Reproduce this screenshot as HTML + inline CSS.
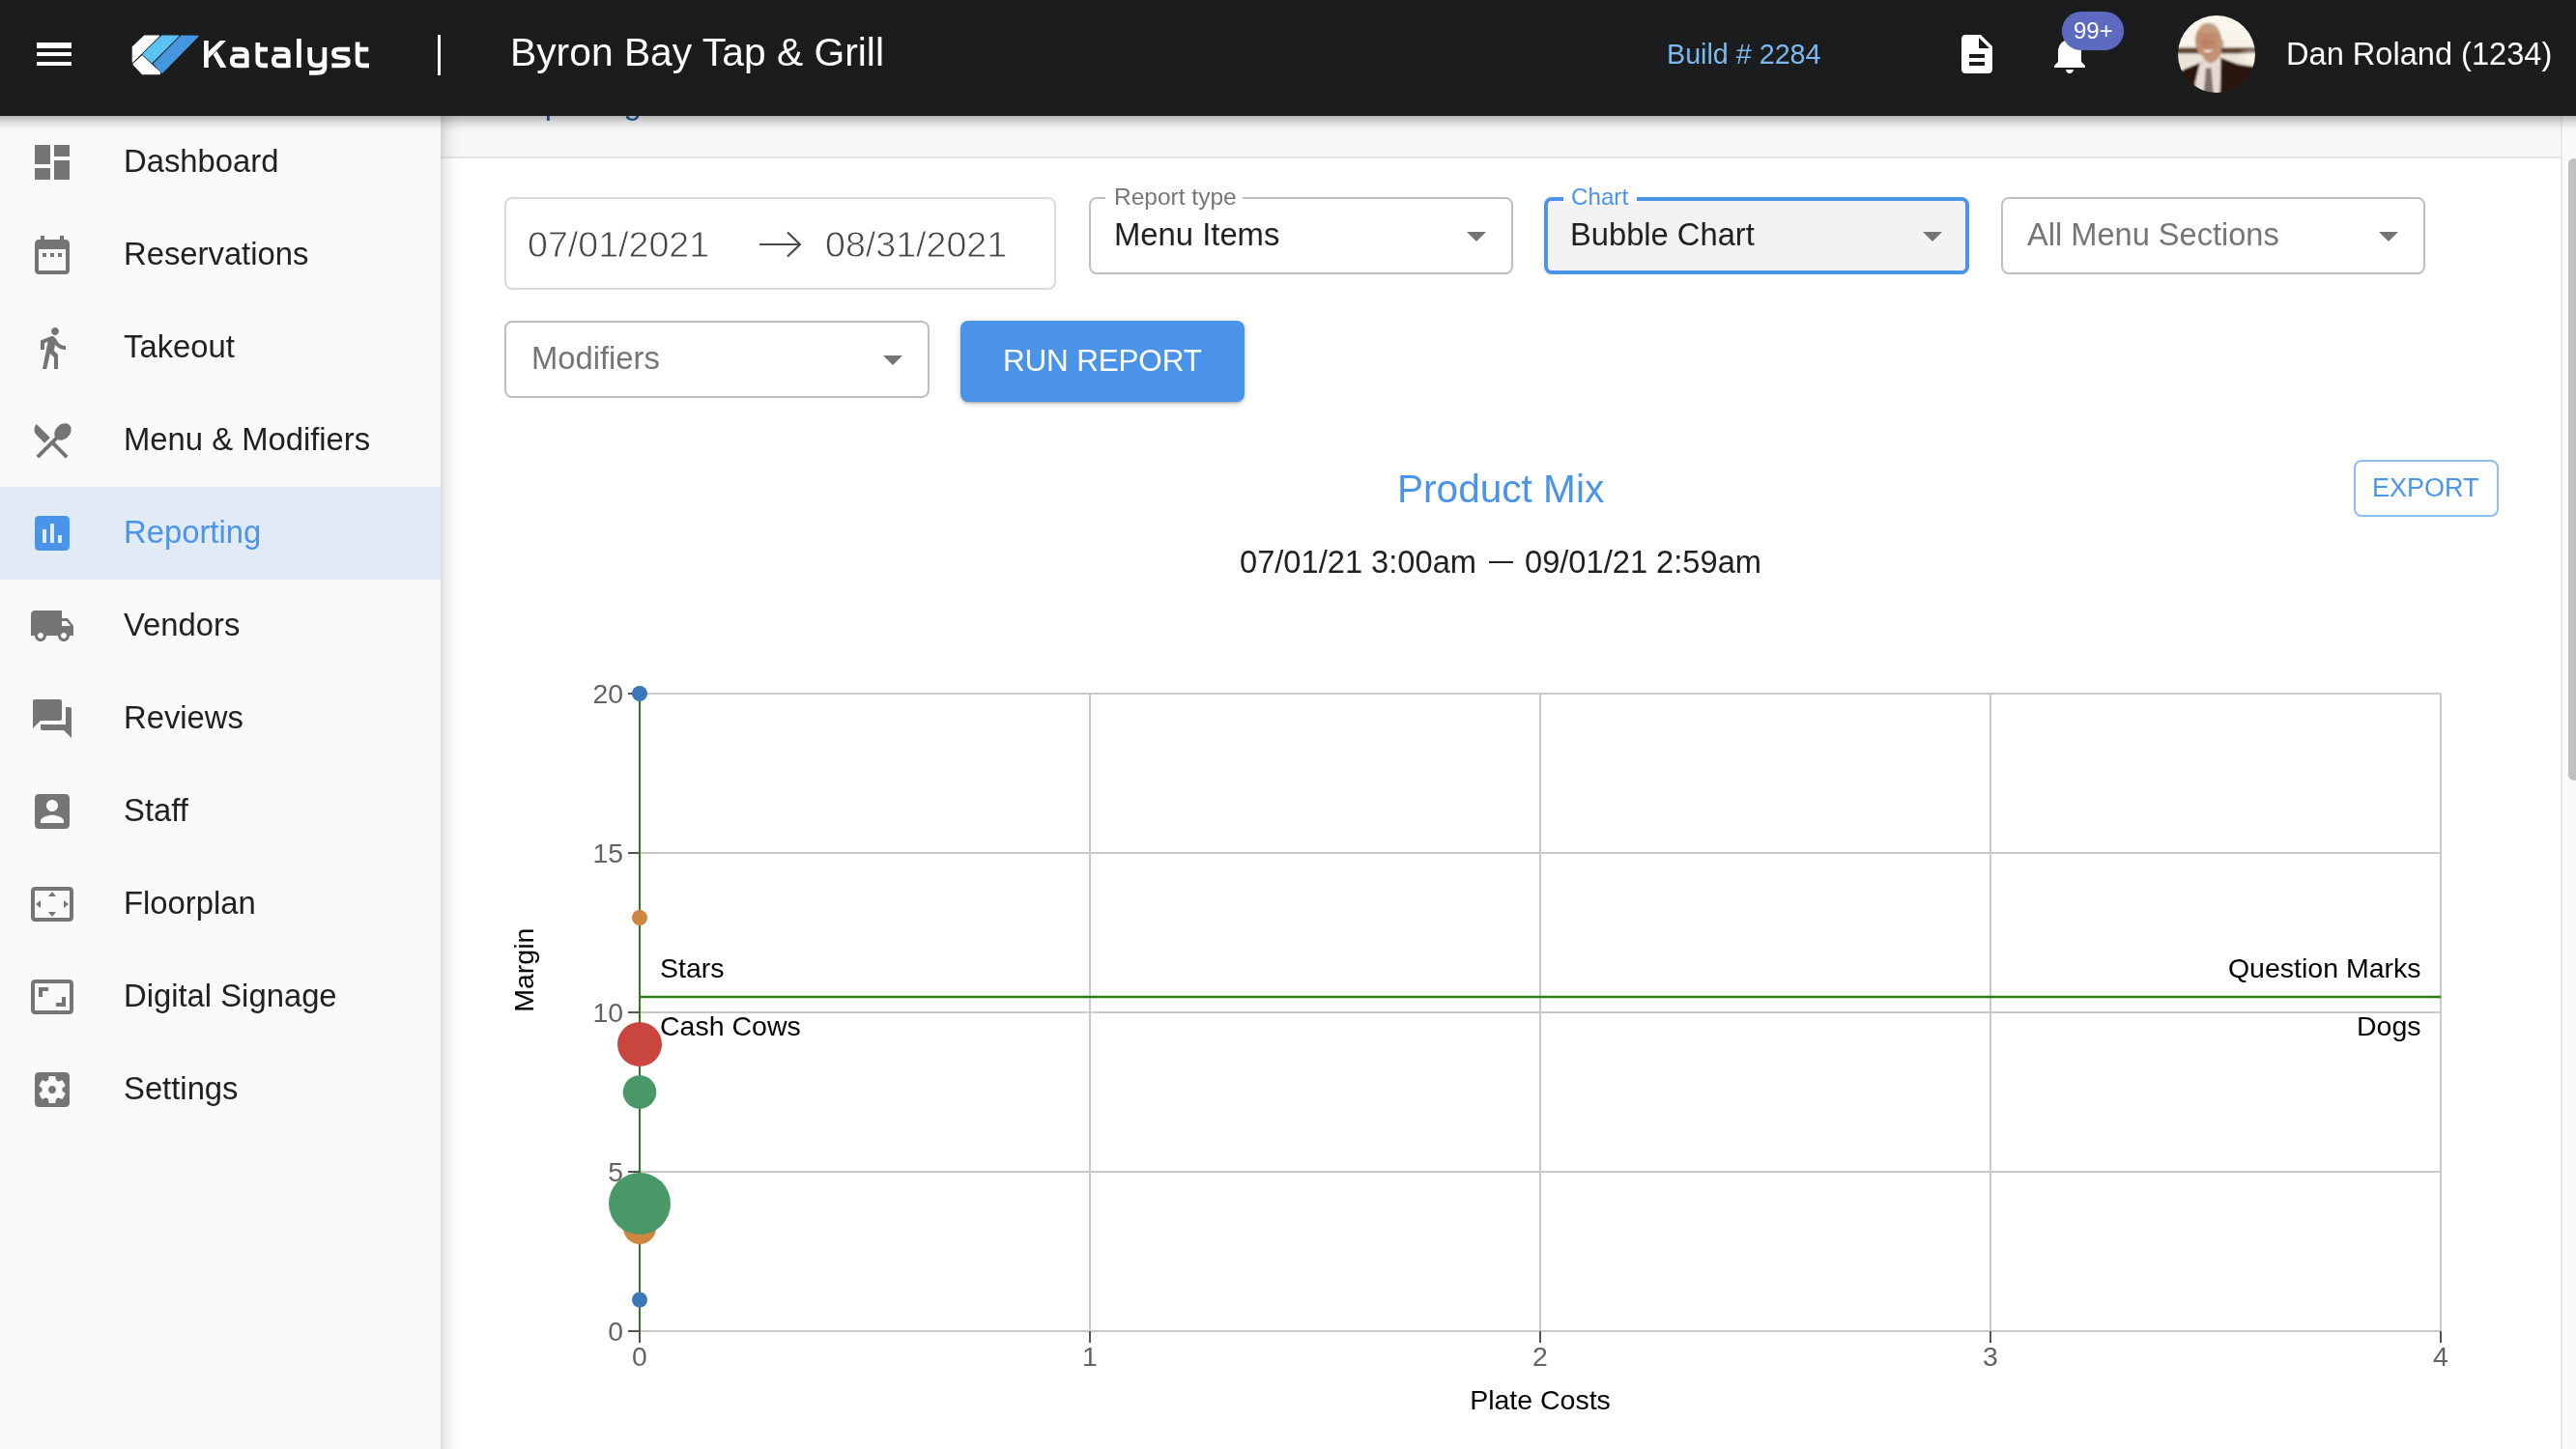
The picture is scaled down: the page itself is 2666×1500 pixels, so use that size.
<!DOCTYPE html>
<html><head><meta charset="utf-8">
<style>
*{box-sizing:border-box;margin:0;padding:0}
html,body{width:2666px;height:1500px;overflow:hidden;background:#fff;-webkit-font-smoothing:antialiased;font-family:"Liberation Sans",sans-serif}
.abs{position:absolute}
#hdr{position:absolute;left:0;top:0;width:2666px;height:120px;background:#1b1c1e;z-index:10}
#hshadow{position:absolute;left:-60px;top:0;width:2800px;height:120px;background:#1b1c1e;z-index:9;box-shadow:0 2px 14px rgba(0,0,0,.45)}
#main{position:absolute;left:0;top:0;width:2666px;height:1500px}
#side{position:absolute;left:0;top:120px;width:456px;height:1380px;background:#fafafa;z-index:5}
#sshadow{position:absolute;left:456px;top:120px;width:22px;height:1380px;z-index:5;background:linear-gradient(to right,rgba(0,0,0,.14) 0,rgba(0,0,0,.085) 4px,rgba(0,0,0,.05) 9px,rgba(0,0,0,.02) 14px,rgba(0,0,0,0) 21px)}
.item{position:absolute;left:0;width:456px;height:96px}
.item svg{position:absolute;left:30px;top:24px;width:48px;height:48px;fill:#757575}
.item span{position:absolute;left:128px;top:-1px;line-height:96px;font-size:32.8px;color:#212121}
.item.sel{background:#e0ebf6}
.item.sel svg{fill:#4a94e9}
.item.sel span{color:#4a94e9}
#crumb{position:absolute;left:456px;top:120px;width:2194px;height:44px;background:#f6f7f9;border-bottom:2px solid #e4e6e9}
#sb{position:absolute;left:2650px;top:120px;width:16px;height:1380px;background:#fafafa;border-left:2px solid #e8e8e8}
#thumb{position:absolute;left:2658px;top:164px;width:12px;height:644px;background:#c1c1c1;border-radius:8px}
.box{position:absolute;border-radius:8px;background:#fff}
.lbl{position:absolute;font-size:24.5px;line-height:24px;white-space:nowrap}
.gap{position:absolute;background:#fff}
.sel-arrow{position:absolute;width:0;height:0;border-left:10px solid transparent;border-right:10px solid transparent;border-top:10px solid #757575}
.txt{position:absolute;white-space:nowrap}
body>div,body>svg{will-change:transform}
</style></head><body>

<div id="hshadow"></div>
<div id="hdr">
  <svg class="abs" style="left:32px;top:32px" width="48" height="48" viewBox="0 0 24 24"><path fill="#fff" d="M3 18h18v-2H3v2zm0-5h18v-2H3v2zm0-6v2h18V6H3z"/></svg>
  
  <svg class="abs" style="left:0;top:0" width="400" height="100" viewBox="0 0 400 100">
    <g stroke-linejoin="round" stroke-width="1.2">
      <path d="M149.6 37 L164.6 37 L137.3 64 L137.3 48.6 Z" fill="#fff" stroke="#fff"/>
      <path d="M137.9 66.5 L147.1 58 L165.4 75 L165.4 76.6 L147.3 76.6 Z" fill="#fff" stroke="#fff"/>
      <path d="M148 56.2 L167.8 37 L184.8 37.2 L157.3 64.7 Z" fill="#5bc3f3" stroke="#5bc3f3"/>
      <path d="M159.2 66 L187.8 37 L205.2 37.3 L167.8 75.4 Z" fill="#4596de" stroke="#4596de"/>
    </g>
    <path fill="#fff" d="M227.8 42H234L215.6 60.8V53.6ZM220.6 56.6L224.3 52.8L234.4 70H228.2Z"/>
    <g fill="none" stroke="#fff" stroke-width="4.7">
      <path d="M213.4 42V70"/>
      <path d="M240.5 51.2H250Q255.3 51.2 255.3 56.5V70M255.3 58.2H245Q240.3 58.2 240.3 63Q240.3 67.8 245 67.8H255.3"/>
      <path d="M266.8 44V63Q266.8 67.8 272 67.8H277M264.4 51.2H277"/>
      <path d="M283.5 51.2H293Q298.3 51.2 298.3 56.5V70M298.3 58.2H288Q283.3 58.2 283.3 63Q283.3 67.8 288 67.8H298.3"/>
      <path d="M309.4 40V70"/>
      <path d="M320.7 49V61Q320.7 67.8 328 67.8Q335.9 67.8 335.9 61M335.9 49V70Q335.9 75.4 328 75.4H320"/>
      <path d="M362 51.2H350Q345.5 51.2 345.5 55Q345.5 58.8 350 59.2L356 59.8Q360.4 60.3 360.4 64Q360.4 67.8 356 67.8H343.3"/>
      <path d="M370.1 43.6V63Q370.1 67.8 375 67.8H382M367.7 51.2H381.3"/>
    </g>
  </svg>
  <svg class="abs" style="left:2022px;top:32px" width="48" height="48" viewBox="0 0 24 24"><path fill="#fff" d="M14 2H6c-1.1 0-1.99.9-1.99 2L4 20c0 1.1.89 2 1.99 2H18c1.1 0 2-.9 2-2V8l-6-6zm2 16H8v-2h8v2zm0-4H8v-2h8v2zm-3-5V3.5L18.5 9H13z"/></svg>
  <svg class="abs" style="left:2118px;top:32px" width="48" height="48" viewBox="0 0 24 24"><path fill="#fff" d="M12 22c1.1 0 2-.9 2-2h-4c0 1.1.89 2 2 2zm6-6v-5c0-3.07-1.64-5.64-4.5-6.32V4c0-.83-.67-1.5-1.5-1.5s-1.5.67-1.5 1.5v.68C7.63 5.36 6 7.92 6 11v5l-2 2v1h16v-1l-2-2z"/></svg>
  <div class="abs" style="left:2134px;top:12px;width:64px;height:40px;border-radius:20px;background:#5c6bc0"></div>
  <div class="txt" style="left:2146px;top:16px;font-size:24px;color:#fff;line-height:32px">99+</div>
  <svg class="abs" style="left:2254px;top:16px" width="80" height="80" viewBox="0 0 80 80">
    <defs>
      <clipPath id="av"><circle cx="40" cy="40" r="40"/></clipPath>
      <filter id="bl" x="-10%" y="-10%" width="120%" height="120%"><feGaussianBlur stdDeviation="0.85"/></filter>
      <linearGradient id="sky" x1="0" y1="0" x2="0" y2="1"><stop offset="0" stop-color="#fbf8f1"/><stop offset="1" stop-color="#f3ecdf"/></linearGradient>
      <radialGradient id="face" cx=".45" cy=".55" r=".6"><stop offset="0" stop-color="#c08062"/><stop offset=".6" stop-color="#c28e70"/><stop offset="1" stop-color="#b9a083"/></radialGradient>
      <radialGradient id="sun" cx=".8" cy=".45" r=".35"><stop offset="0" stop-color="#fff8e8" stop-opacity="1"/><stop offset="1" stop-color="#fff8e8" stop-opacity="0"/></radialGradient>
    </defs>
    <g clip-path="url(#av)">
      <g filter="url(#bl)">
      <rect x="-5" y="-5" width="90" height="90" fill="url(#sky)"/>
      <rect x="-5" y="33.3" width="90" height="6.5" fill="#5f4433"/>
      <rect x="-5" y="39.5" width="90" height="15" fill="#ebe4d8"/>
      <rect x="40" y="30" width="45" height="30" fill="url(#sun)"/>
      <path d="M-5 62 L8 55 L22 49.5 L28 47 L44 43.5 L50 46 L62 50.5 L78 53 L85 58 V85 H-5Z" fill="#2b1911"/>
      <path d="M22.5 49.5 L29 46.5 L44.5 43 L43.5 85 L18 85 L17.5 70Z" fill="#e6dad6"/>
      <path d="M22.5 49.5 L17 72 L10 85 L-5 85 V62Z" fill="#2b1911"/>
      <path d="M29 54.5 L34.5 54.5 L37 85 L26.5 85Z" fill="#7d6f6d"/>
      <path d="M24 38 Q26 47 34 49.5 Q42 47 45 38 V34 H24Z" fill="#c38f72"/>
      <ellipse cx="31.5" cy="26" rx="13.6" ry="18" fill="url(#face)"/>
      <ellipse cx="31.5" cy="13" rx="10" ry="6" fill="#cdb08e" opacity=".35"/>
      <ellipse cx="45.3" cy="29" rx="2" ry="4.2" fill="#c49a7c"/>
      <rect x="24" y="27" width="6" height="2" rx="1" fill="#8a5a45" opacity=".35"/>
      <rect x="33" y="27" width="6" height="2" rx="1" fill="#8a5a45" opacity=".35"/>
      <path d="M26.5 36 Q31 39.3 35.8 36 Q31 37.2 26.5 36Z" fill="#fff" stroke="#fff" stroke-width="0.8"/>
      </g>
    </g>
  </svg>
  <div class="txt" style="left:528px;top:26px;font-size:40.8px;color:#fff;line-height:56px">Byron Bay Tap &amp; Grill</div>
  <div class="abs" style="left:453px;top:36px;width:3px;height:42px;background:#fff"></div>
  <div class="txt" style="left:1725px;top:38px;font-size:28.7px;color:#7cb9f0;line-height:36px">Build # 2284</div>
  <div class="txt" style="left:2366px;top:34px;font-size:32.6px;color:#fff;line-height:44px">Dan Roland (1234)</div>
</div>

<div id="crumb"><div class="txt" style="left:66px;top:-35px;font-size:32.7px;color:#2a5d9f;line-height:44px">Reporting</div></div>

<div id="side">
  <div class="item" style="top:0"><svg viewBox="0 0 24 24"><path d="M3 13h8V3H3v10zm0 8h8v-6H3v6zm10 0h8V11h-8v10zm0-18v6h8V3h-8z"/></svg><span>Dashboard</span></div>
  <div class="item" style="top:96px"><svg viewBox="0 0 24 24"><path d="M9 11H7v2h2v-2zm4 0h-2v2h2v-2zm4 0h-2v2h2v-2zm2-7h-1V2h-2v2H8V2H6v2H5c-1.11 0-1.99.9-1.99 2L3 20c0 1.1.89 2 2 2h14c1.1 0 2-.9 2-2V6c0-1.1-.9-2-2-2zm0 16H5V9h14v11z"/></svg><span>Reservations</span></div>
  <div class="item" style="top:192px"><svg viewBox="0 0 24 24"><path d="M13.5 5.5c1.1 0 2-.9 2-2s-.9-2-2-2-2 .9-2 2 .9 2 2 2zM9.8 8.9L7 23h2.1l1.8-8 2.1 2v6h2v-7.5l-2.1-2 .6-3C14.8 12 16.8 13 19 13v-2c-1.9 0-3.5-1-4.3-2.4l-1-1.6c-.4-.6-1-1-1.7-1-.3 0-.5.1-.8.1L6 8.3V13h2V9.6l1.8-.7"/></svg><span>Takeout</span></div>
  <div class="item" style="top:288px"><svg viewBox="0 0 24 24"><path d="M8.1 13.34l2.83-2.83L3.91 3.5c-1.56 1.56-1.56 4.09 0 5.66l4.19 4.18zm6.78-1.81c1.53.71 3.68.21 5.27-1.38 1.910-1.91 2.28-4.65.81-6.12-1.46-1.46-4.2-1.1-6.12.81-1.59 1.59-2.09 3.74-1.38 5.27L3.7 19.87l1.41 1.41L12 14.41l6.88 6.88 1.41-1.41L13.41 13l1.47-1.47z"/></svg><span>Menu &amp; Modifiers</span></div>
  <div class="item sel" style="top:384px"><svg viewBox="0 0 24 24"><path d="M19 3H5c-1.1 0-2 .9-2 2v14c0 1.1.9 2 2 2h14c1.1 0 2-.9 2-2V5c0-1.1-.9-2-2-2zM9 17H7v-7h2v7zm4 0h-2V7h2v10zm4 0h-2v-4h2v4z"/></svg><span>Reporting</span></div>
  <div class="item" style="top:480px"><svg viewBox="0 0 24 24"><path d="M20 8h-3V4H3c-1.1 0-2 .9-2 2v11h2c0 1.66 1.34 3 3 3s3-1.34 3-3h6c0 1.66 1.34 3 3 3s3-1.34 3-3h2v-5l-3-4zM6 18.5c-.83 0-1.5-.67-1.5-1.5s.67-1.5 1.5-1.5 1.5.67 1.5 1.5-.67 1.5-1.5 1.5zm13.5-9l1.960 2.5H17V9.5h2.5zm-1.5 9c-.83 0-1.5-.67-1.5-1.5s.67-1.5 1.5-1.5 1.5.67 1.5 1.5-.67 1.5-1.5 1.5z"/></svg><span>Vendors</span></div>
  <div class="item" style="top:576px"><svg viewBox="0 0 24 24"><path d="M21 6h-2v9H6v2c0 .55.45 1 1 1h11l4 4V7c0-.55-.45-1-1-1zm-4 6V3c0-.55-.45-1-1-1H3c-.55 0-1 .45-1 1v14l4-4h10c.55 0 1-.45 1-1z"/></svg><span>Reviews</span></div>
  <div class="item" style="top:672px"><svg viewBox="0 0 24 24"><path d="M3 5v14c0 1.1.89 2 2 2h14c1.1 0 2-.9 2-2V5c0-1.1-.9-2-2-2H5c-1.11 0-2 .9-2 2zm12 4c0 1.66-1.34 3-3 3s-3-1.34-3-3 1.34-3 3-3 3 1.34 3 3zm-9 8c0-2 4-3.1 6-3.1s6 1.1 6 3.1v1H6v-1z"/></svg><span>Staff</span></div>
  <div class="item" style="top:768px"><svg viewBox="0 0 24 24"><path d="M12.01 5.5L10 8h4l-1.99-2.5zM18 10v4l2.5-1.99L18 10zM6 10l-2.5 2.01L6 14v-4zm8 6h-4l2.01 2.5L14 16zm7-13H3c-1.1 0-2 .9-2 2v14c0 1.1.9 2 2 2h18c1.1 0 2-.9 2-2V5c0-1.1-.9-2-2-2zm0 16.01H3V4.99h18v14.02z"/></svg><span>Floorplan</span></div>
  <div class="item" style="top:864px"><svg viewBox="0 0 24 24"><path d="M19 12h-2v3h-3v2h5v-5zM7 9h3V7H5v5h2V9zm14-6H3c-1.1 0-2 .9-2 2v14c0 1.1.9 2 2 2h18c1.1 0 2-.9 2-2V5c0-1.1-.9-2-2-2zm0 16.01H3V4.99h18v14.02z"/></svg><span>Digital Signage</span></div>
  <div class="item" style="top:960px"><svg viewBox="0 0 24 24"><path d="M12 10c-1.1 0-2 .9-2 2s.9 2 2 2 2-.9 2-2-.9-2-2-2zm7-7H5c-1.11 0-2 .9-2 2v14c0 1.1.89 2 2 2h14c1.1 0 2-.9 2-2V5c0-1.1-.9-2-2-2zm-1.75 9c0 .23-.02.46-.05.68l1.48 1.16c.13.11.17.3.08.45l-1.4 2.42c-.09.15-.27.21-.43.15l-1.74-.7c-.36.28-.76.51-1.18.69l-.26 1.85c-.03.17-.18.3-.35.3h-2.8c-.17 0-.32-.13-.35-.29l-.26-1.85c-.43-.18-.82-.41-1.18-.69l-1.74.7c-.16.06-.34 0-.43-.15l-1.4-2.42c-.09-.15-.05-.34.08-.45l1.48-1.16c-.03-.23-.05-.46-.05-.69 0-.23.02-.46.05-.68l-1.48-1.16c-.13-.11-.17-.3-.08-.45l1.4-2.42c.09-.15.27-.21.43-.15l1.74.7c.36-.28.76-.51 1.18-.69l.26-1.85c.03-.17.18-.3.35-.3h2.8c.17 0 .32.13.35.29l.26 1.85c.43.18.82.41 1.18.69l1.74-.7c.16-.06.34 0 .43.15l1.4 2.42c.09.15.05.34-.08.45l-1.48 1.160c.03.23.05.46.05.69z"/></svg><span>Settings</span></div>
</div>

<div id="sshadow"></div><div id="sb"></div><div id="thumb"></div>


<div id="main">
  <div class="box" style="left:522px;top:204px;width:571px;height:96px;border:2px solid #dadcdc"></div>
  <div class="txt" style="left:546px;top:228px;font-size:37.6px;color:#454545;-webkit-text-stroke:0.8px #fff;line-height:50px">07/01/2021</div>
  <svg class="abs" style="left:784px;top:236px" width="48" height="34" viewBox="0 0 48 34"><path d="M2 17H44M31 4.5L44 17L31 29.5" fill="none" stroke="#4a4a4a" stroke-width="2.2"/></svg>
  <div class="txt" style="left:854px;top:228px;font-size:37.6px;color:#454545;-webkit-text-stroke:0.8px #fff;line-height:50px">08/31/2021</div>

  <div class="box" style="left:1127px;top:204px;width:439px;height:80px;border:2px solid #bfbfbf"></div>
  <div class="gap" style="left:1144px;top:203px;width:142px;height:4px"></div><div class="lbl" style="left:1153px;top:192px;color:#757575">Report type</div>
  <div class="txt" style="left:1153px;top:221px;font-size:32.8px;color:#212121;line-height:44px">Menu Items</div>
  <div class="sel-arrow" style="left:1518px;top:240px"></div>

  <div class="box" style="left:1598px;top:204px;width:440px;height:80px;border:4px solid #4a94e9;background:#f2f2f2"></div>
  <div class="gap" style="left:1618px;top:203px;width:76px;height:6px"></div><div class="lbl" style="left:1626px;top:192px;color:#4a94e9;font-size:24.2px">Chart</div>
  <div class="txt" style="left:1625px;top:221px;font-size:32.7px;color:#212121;line-height:44px">Bubble Chart</div>
  <div class="sel-arrow" style="left:1990px;top:240px"></div>

  <div class="box" style="left:2071px;top:204px;width:439px;height:80px;border:2px solid #bfbfbf"></div>
  <div class="txt" style="left:2098px;top:221px;font-size:32.6px;color:#757575;line-height:44px">All Menu Sections</div>
  <div class="sel-arrow" style="left:2462px;top:240px"></div>

  <div class="box" style="left:522px;top:332px;width:440px;height:80px;border:2px solid #bfbfbf"></div>
  <div class="txt" style="left:550px;top:349px;font-size:32.75px;color:#757575;line-height:44px">Modifiers</div>
  <div class="sel-arrow" style="left:914px;top:368px"></div>

  <div class="abs" style="left:994px;top:332px;width:294px;height:84px;background:#4a93e8;border-radius:8px;box-shadow:0 3px 2px -2px rgba(0,0,0,.2),0 2px 4px 0 rgba(0,0,0,.14),0 1px 10px 0 rgba(0,0,0,.12)"></div>
  <div class="txt" style="left:1038px;top:353px;font-size:31.5px;color:#fff;line-height:40px;letter-spacing:-0.2px">RUN REPORT</div>

  <div class="txt" style="left:1446px;top:478px;font-size:40.6px;color:#4a94e9;line-height:56px">Product Mix</div>
  <div class="box" style="left:2436px;top:476px;width:150px;height:59px;border:2px solid #90bdf0"></div>
  <div class="txt" style="left:2455px;top:487px;font-size:27px;color:#4a94e9;line-height:36px;letter-spacing:0">EXPORT</div>
  <div class="txt" style="left:1283px;top:559.5px;font-size:32.65px;color:#212121;line-height:44px">07/01/21 3:00am</div>
  <div class="abs" style="left:1541px;top:581px;width:25px;height:2px;background:#212121"></div>
  <div class="txt" style="left:1578px;top:559.5px;font-size:32.65px;color:#212121;line-height:44px">09/01/21 2:59am</div>

  <svg class="abs" style="left:0;top:0" width="2666" height="1500" viewBox="0 0 2666 1500" font-family="Liberation Sans, sans-serif">
    <g stroke="#c9c9c9" stroke-width="2" fill="none">
      <path d="M662 718H2526M662 883H2526M662 1048H2526M662 1213H2526M662 1378H2526"/>
      <path d="M1128 718V1378M1594 718V1378M2060 718V1378M2526 718V1378"/>
    </g>
    <g stroke="#555" stroke-width="2">
      <path d="M650 718H662M650 883H662M650 1048H662M650 1213H662M650 1378H662"/>
      <path d="M662 1378V1390M1128 1378V1390M1594 1378V1390M2060 1378V1390M2526 1378V1390"/>
    </g>
    <g fill="#636363" font-size="28.4" text-anchor="end">
      <text x="645" y="728.3">20</text><text x="645" y="893.3">15</text><text x="645" y="1058.3">10</text><text x="645" y="1223.3">5</text><text x="645" y="1388.3">0</text>
    </g>
    <g fill="#636363" font-size="28.4" text-anchor="middle">
      <text x="662" y="1414">0</text><text x="1128" y="1414">1</text><text x="1594" y="1414">2</text><text x="2060" y="1414">3</text><text x="2526" y="1414">4</text>
    </g>
    <g fill="#000" font-size="28.5">
      <text x="683" y="1011.8">Stars</text><text x="683" y="1071.8">Cash Cows</text>
      <text x="2505.5" y="1011.8" text-anchor="end">Question Marks</text><text x="2505.5" y="1071.8" text-anchor="end">Dogs</text>
      <text x="1594" y="1458.5" text-anchor="middle">Plate Costs</text>
      <text transform="translate(552,1004.2) rotate(-90)" text-anchor="middle">Margin</text>
    </g>
    <path d="M662 718V1378" stroke="#2b7d1a" stroke-width="2"/>
    <path d="M662 1032H2526" stroke="#2b7d1a" stroke-width="2.4"/>
    <circle cx="662" cy="718" r="8" fill="#3a78b9"/>
    <circle cx="662" cy="950" r="8" fill="#ce873e"/>
    <circle cx="662" cy="1081" r="23" fill="#c9463f"/>
    <circle cx="662" cy="1130.5" r="17.3" fill="#4a9767"/>
    <circle cx="662" cy="1271" r="17" fill="#ce873e"/>
    <circle cx="662" cy="1246" r="32" fill="#4a9767"/>
    <circle cx="662" cy="1345.5" r="8" fill="#3a78b9"/>
  </svg>
</div>

</body></html>
